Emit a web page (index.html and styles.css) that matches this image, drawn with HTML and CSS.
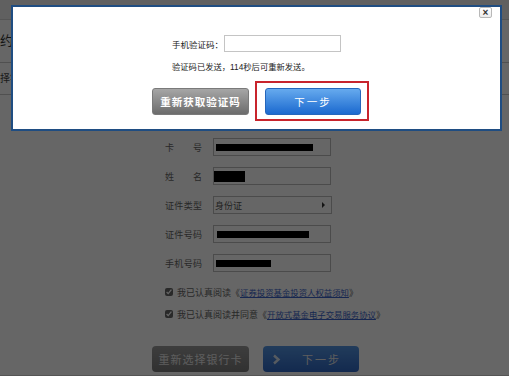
FILE: index.html
```html
<!DOCTYPE html>
<html lang="zh-CN">
<head>
    <meta charset="UTF-8">
    <title>验证手机</title>
    <link rel="stylesheet" href="styles.css">
</head>
<body>

    <div class="page">
        <div class="topbar"></div>
        <div class="title">签约</div>
        <div class="steps">选择银行卡</div>

        <div class="form">
            <div class="row">
                <span class="label">卡号</span>
                <div class="field"><span class="mask mask-card"></span></div>
            </div>
            <div class="row">
                <span class="label">姓名</span>
                <div class="field"><span class="mask mask-name"></span></div>
            </div>
            <div class="row">
                <span class="label">证件类型</span>
                <div class="field select">身份证<span class="arrow"></span></div>
            </div>
            <div class="row">
                <span class="label">证件号码</span>
                <div class="field"><span class="mask mask-id"></span></div>
            </div>
            <div class="row">
                <span class="label">手机号码</span>
                <div class="field"><span class="mask mask-phone"></span></div>
            </div>

            <div class="agree-list">
                <label class="agree"><input type="checkbox" checked>我已认真阅读《 <a href="#">证券投资基金投资人权益须知</a>》</label>
                <label class="agree"><input type="checkbox" checked>我已认真阅读并同意《 <a href="#">开放式基金电子交易服务协议</a>》</label>
            </div>

            <div class="page-actions">
                <button class="btn-dark">重新选择银行卡</button>
                <button class="btn-next">
                    <svg width="9" height="11" viewBox="0 0 9 11"><path d="M2 1.5 L6.5 5.5 L2 9.5" fill="none" stroke="#d8e4f0" stroke-width="2.4"/></svg>
                    <span>下一步</span>
                </button>
            </div>
        </div>
    </div>

    <!-- mask over the page while the dialog is open -->
    <div class="overlay"></div>

    <div class="dialog">
        <button class="close">×</button>
        <div class="code-block">
            <div class="code-row">
                <span class="code-label">手机验证码：</span>
                <input type="text" class="code-input">
            </div>
            <div class="code-tip">验证码已发送，114秒后可重新发送。</div>
        </div>
        <div class="actions">
            <button class="btn btn-grey">重新获取验证码</button>
            <button class="btn btn-blue">下一步</button>
        </div>
    </div>

</body>
</html>
```

FILE: styles.css
```css
body {
    margin: 0;
    background-color: #fff;
    font-family: "Liberation Sans", "Noto Sans CJK SC", sans-serif;
    color: #666;
}

.page {
    height: 382px;
    overflow: hidden;
}

/* page header strips (mostly under the dialog) */
.topbar {
    height: 19px;
    background-color: #f0f0f0;
    border-bottom: 1px solid #d4d4d4;
}
.title {
    height: 42px;
    line-height: 42px;
    font-size: 13px;
    color: #333;
    text-indent: -13px;
    white-space: nowrap;
    border-bottom: 1px solid #c8c8c8;
}
.steps {
    height: 31px;
    line-height: 31px;
    font-size: 10px;
    color: #444;
    text-indent: -10px;
    white-space: nowrap;
    border-bottom: 1px solid #c8c8c8;
}

/* form */
.form {
    padding: 43px 0 0 165px;
}
.row {
    display: flex;
    align-items: center;
    height: 18px;
    margin-bottom: 11px;
}
.label {
    width: 37px;
    margin-right: 11px;
    font-size: 9px;
    color: #666;
    text-align-last: justify;
}
.field {
    width: 115px;
    height: 16px;
    padding-left: 1px;
    border: 1px solid #bbb;
    background-color: #fff;
    display: flex;
    align-items: center;
    font-size: 9px;
    color: #555;
}
.mask {
    display: block;
    background-color: #000;
}
.mask-card { width: 97px; height: 7px; margin-left: 1px; }
.mask-name { width: 31px; height: 11px; margin-left: -1px; }
.mask-id { width: 92px; height: 7px; margin-left: 2px; }
.mask-phone { width: 55px; height: 7px; margin-left: 1px; }

.select {
    justify-content: space-between;
    padding-right: 6px;
    width: 110px;
}
.arrow {
    width: 0;
    height: 0;
    border-top: 3px solid transparent;
    border-bottom: 3px solid transparent;
    border-left: 3px solid #333;
}

.agree-list {
    margin-top: -2px;
}
.agree {
    display: flex;
    align-items: center;
    height: 22px;
    font-size: 9px;
    color: #666;
    white-space: nowrap;
}
.agree input {
    width: 8px;
    height: 8px;
    margin: 0 4px 0 0;
    accent-color: #666;
}
.agree a {
    color: #3a63c8;
    font-size: 8.4px;
    text-decoration: underline;
}

.page-actions {
    display: flex;
    gap: 14px;
    margin: 21px 0 0 -13px;
}
.btn-dark,
.btn-next {
    height: 26px;
    border: none;
    border-radius: 4px;
    color: #e8e8e8;
    font-family: inherit;
    font-size: 11px;
    letter-spacing: 1px;
    padding: 0;
}
.btn-dark {
    width: 97px;
    background: linear-gradient(#9a9a9a, #7a7a7a);
}
.btn-next {
    width: 96px;
    background: linear-gradient(#5596e4, #3068c4);
    display: flex;
    align-items: center;
    padding-left: 9px;
}
.btn-next span {
    margin-left: 21px;
    letter-spacing: 2px;
}

/* overlay */
.overlay {
    position: fixed;
    top: 0;
    left: 0;
    right: 0;
    height: 375px;
    z-index: 10;
    background-color: rgba(0, 0, 0, 0.6);
    border-bottom: 1px solid #555;
}

/* dialog */
.dialog {
    position: absolute;
    top: 5px;
    left: 11px;
    z-index: 11;
    width: 487px;
    height: 122px;
    background-color: #fff;
    border: 2px solid #1f4d82;
    display: flex;
    flex-direction: column;
    align-items: center;
}
.close {
    position: absolute;
    top: 0;
    right: 8px;
    width: 13px;
    height: 11px;
    padding: 0;
    border: 1px solid #b8b8b8;
    border-radius: 2px;
    background: linear-gradient(#fff, #ececec);
    font-size: 10px;
    line-height: 8px;
    color: #333;
    font-weight: bold;
}
.code-block {
    width: 169px;
    margin-top: 28px;
}
.code-row {
    display: flex;
    align-items: center;
    height: 17px;
}
.code-label {
    width: 52px;
    font-size: 8.5px;
    color: #222;
}
.code-input {
    width: 115px;
    height: 15px;
    margin: 0;
    padding: 0;
    border: 1px solid #c4c4c4;
}
.code-tip {
    margin-top: 8px;
    height: 14px;
    line-height: 14px;
    font-size: 8.3px;
    color: #222;
    white-space: nowrap;
}
.actions {
    display: flex;
    gap: 16px;
    margin-top: 14px;
}
.btn {
    height: 27px;
    border-radius: 3px;
    padding: 0;
    color: #fff;
    font-family: inherit;
    font-weight: bold;
    font-size: 10.5px;
    letter-spacing: 1px;
}
.btn-grey {
    width: 97px;
    border: 1px solid #7a7a7a;
    background: linear-gradient(#a6a6a6, #6c6c6c);
}
.btn-blue {
    position: relative;
    width: 96px;
    border: 1px solid #2566bb;
    background: linear-gradient(#66aaee, #1b69cf);
    font-weight: normal;
    letter-spacing: 2px;
}
/* red highlight around the next button */
.btn-blue::after {
    content: "";
    position: absolute;
    top: -8px;
    left: -11px;
    right: -9px;
    bottom: -7px;
    border: 2px solid #c8242c;
}
```
